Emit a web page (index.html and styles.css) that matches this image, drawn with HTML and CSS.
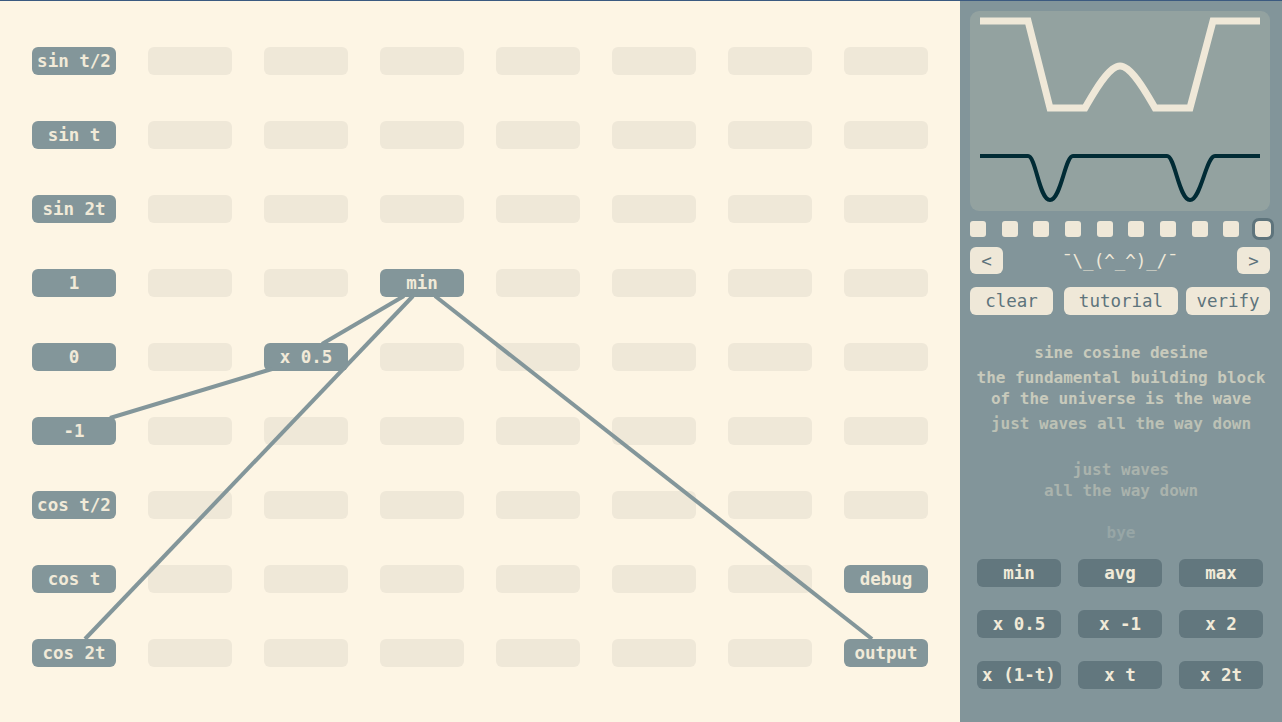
FILE: index.html
```html
<!DOCTYPE html>
<html lang="en">
<head>
    <meta charset="UTF-8">
    <title>sine cosine desine</title>
    <link rel="stylesheet" href="styles.css">
</head>
<body>
    <div class="board">
        <div class="grid">
            <div class="cell on">sin t/2</div><div class="cell"></div><div class="cell"></div><div class="cell"></div><div class="cell"></div><div class="cell"></div><div class="cell"></div><div class="cell"></div>
            <div class="cell on">sin t</div><div class="cell"></div><div class="cell"></div><div class="cell"></div><div class="cell"></div><div class="cell"></div><div class="cell"></div><div class="cell"></div>
            <div class="cell on">sin 2t</div><div class="cell"></div><div class="cell"></div><div class="cell"></div><div class="cell"></div><div class="cell"></div><div class="cell"></div><div class="cell"></div>
            <div class="cell on">1</div><div class="cell"></div><div class="cell"></div><div class="cell on">min</div><div class="cell"></div><div class="cell"></div><div class="cell"></div><div class="cell"></div>
            <div class="cell on">0</div><div class="cell"></div><div class="cell on">x 0.5</div><div class="cell"></div><div class="cell"></div><div class="cell"></div><div class="cell"></div><div class="cell"></div>
            <div class="cell on">-1</div><div class="cell"></div><div class="cell"></div><div class="cell"></div><div class="cell"></div><div class="cell"></div><div class="cell"></div><div class="cell"></div>
            <div class="cell on">cos t/2</div><div class="cell"></div><div class="cell"></div><div class="cell"></div><div class="cell"></div><div class="cell"></div><div class="cell"></div><div class="cell"></div>
            <div class="cell on">cos t</div><div class="cell"></div><div class="cell"></div><div class="cell"></div><div class="cell"></div><div class="cell"></div><div class="cell"></div><div class="cell on">debug</div>
            <div class="cell on">cos 2t</div><div class="cell"></div><div class="cell"></div><div class="cell"></div><div class="cell"></div><div class="cell"></div><div class="cell"></div><div class="cell on">output</div>
        </div>
        <!-- wires between cells -->
        <svg class="wires" width="960" height="721" viewBox="0 0 960 721">
            <g stroke="#83969a" stroke-width="4" stroke-linecap="butt">
                <line x1="110" y1="417" x2="272" y2="368"/>
                <line x1="322" y1="343" x2="404" y2="295"/>
                <line x1="85" y1="638" x2="413" y2="295"/>
                <line x1="435" y1="295" x2="872" y2="638"/>
            </g>
        </svg>
    </div>

    <div class="panel">
        <div class="scope">
            <svg width="300" height="200" viewBox="0 0 300 200">
                <path d="M10 10 H58 L80 97 H115 C122 85 138 55 150 55 C162 55 178 85 185 97 H220 L243 10 H290" fill="none" stroke="#efe8d8" stroke-width="7"/>
                <path d="M10 145 H58 C66 145 69 189 80 189 C91 189 95 145 103 145 H197 C205 145 209 189 220 189 C231 189 236 145 245 145 H290" fill="none" stroke="#012b35" stroke-width="4"/>
            </svg>
        </div>

        <div class="levels">
            <span class="level"></span><span class="level"></span><span class="level"></span><span class="level"></span><span class="level"></span>
            <span class="level"></span><span class="level"></span><span class="level"></span><span class="level"></span><span class="level current"></span>
        </div>

        <div class="nav">
            <button class="btn small">&lt;</button>
            <span class="face">¯\_(^_^)_/¯</span>
            <button class="btn small">&gt;</button>
        </div>

        <div class="actions">
            <button class="btn clear">clear</button>
            <button class="btn tutorial">tutorial</button>
            <button class="btn verify">verify</button>
        </div>

        <div class="story">
            <p class="t1">sine cosine desine</p>
            <p class="t1">the fundamental building block<br>of the universe is the wave</p>
            <p class="t2">just waves all the way down</p>
            <p class="t3">just waves<br>all the way down</p>
            <p class="t4">bye</p>
        </div>

        <div class="ops">
            <div class="op">min</div>
            <div class="op">avg</div>
            <div class="op">max</div>
            <div class="op">x 0.5</div>
            <div class="op">x -1</div>
            <div class="op">x 2</div>
            <div class="op">x (1-t)</div>
            <div class="op">x t</div>
            <div class="op">x 2t</div>
        </div>
    </div>
</body>
</html>
```

FILE: styles.css
```css
:root {
    --paper: #fdf5e4;
    --slot: #efe8d8;
    --node: #83969a;
    --panel: #82959a;
    --scope: #93a2a0;
    --ink: #5e747c;
    --op: #62777e;
    --cream: #f1ead8;
}

body {
    margin: 0;
    display: flex;
    height: 721px;
    overflow: hidden;
    border-top: 1px solid #3b5a80;
    font-family: 'DejaVu Sans Mono', 'Liberation Mono', monospace;
}

.board {
    position: relative;
    width: 960px;
    background: var(--paper);
}

.grid {
    display: grid;
    grid-template-columns: repeat(8, 84px);
    grid-auto-rows: 28px;
    column-gap: 32px;
    row-gap: 46px;
    padding: 46px 0 0 32px;
}

.cell {
    background: var(--slot);
    border-radius: 6px;
}

.cell.on {
    background: var(--node);
    color: var(--cream);
    font-weight: bold;
    font-size: 17.5px;
    display: flex;
    align-items: center;
    justify-content: center;
    white-space: nowrap;
}

.wires {
    position: absolute;
    left: 0;
    top: 0;
    pointer-events: none;
}

.panel {
    width: 302px;
    padding: 10px;
    background: var(--panel);
    display: flex;
    flex-direction: column;
}

.scope {
    width: 300px;
    height: 200px;
    background: var(--scope);
    border-radius: 9px;
}

.scope svg {
    display: block;
}

.levels {
    display: flex;
    justify-content: space-between;
    width: 300px;
    margin-top: 10px;
}

.level {
    width: 16px;
    height: 16px;
    border-radius: 3px;
    background: var(--slot);
}

.level.current {
    outline: 3px solid var(--ink);
    border-radius: 4px;
    margin-right: -1px;
}

.nav {
    display: flex;
    align-items: center;
    justify-content: space-between;
    width: 300px;
    margin-top: 10px;
}

.btn {
    border: none;
    background: var(--slot);
    color: var(--ink);
    font-family: inherit;
    font-size: 17.5px;
    border-radius: 6px;
    height: 28px;
    padding: 0;
}

.btn.small {
    width: 33px;
    height: 27px;
}

.face {
    color: var(--slot);
    font-size: 17.5px;
}

.actions {
    display: flex;
    width: 300px;
    margin-top: 13px;
}

.btn.clear { width: 83px; }
.btn.tutorial { width: 114px; margin-left: 11px; }
.btn.verify { width: 84px; margin-left: 8px; }

.story {
    margin-top: 27px;
    text-align: center;
    font-size: 16px;
    font-weight: bold;
    line-height: 21px;
}

.story p {
    margin: 0 0 4px;
}

.t1 { color: #c8cabc; }
.t2 { color: #bcc1b5; }
.t3 { color: #aab3ad; margin-top: 25px !important; }
.t4 { color: #97a6a6; margin-top: 21px !important; }

.ops {
    display: grid;
    grid-template-columns: repeat(3, 84px);
    grid-auto-rows: 28px;
    column-gap: 17px;
    row-gap: 23px;
    padding-left: 7px;
    margin-top: 12px;
}

.op {
    background: var(--op);
    color: var(--cream);
    border-radius: 6px;
    font-size: 17.5px;
    font-weight: bold;
    display: flex;
    align-items: center;
    justify-content: center;
    white-space: nowrap;
}
```
